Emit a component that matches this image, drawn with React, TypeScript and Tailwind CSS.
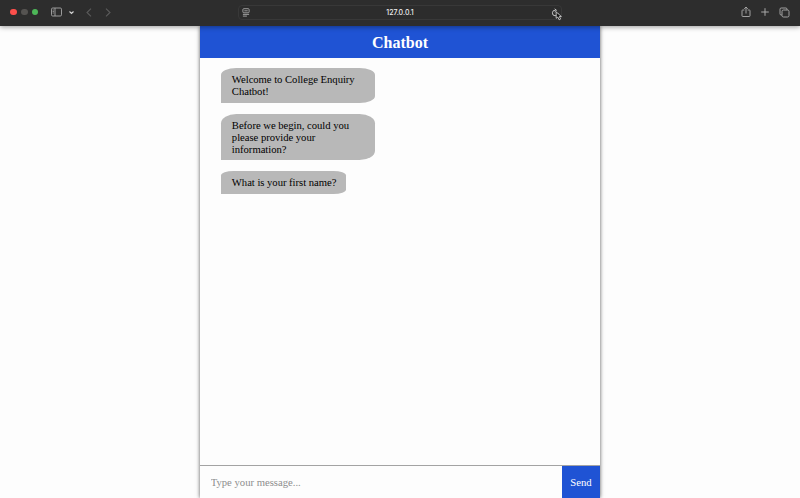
import React from "react";

const messages = [
  { lines: ["Welcome to College Enquiry", "Chatbot!"], box: "w-[153.7px] h-[34.7px]" },
  { lines: ["Before we begin, could you", "please provide your", "information?"], box: "w-[153.7px] h-[46.7px]" },
  { lines: ["What is your first name?"], box: "w-[125px] h-[22.7px]" },
];

function BrowserBar() {
  return (
    <header className="relative z-10 flex h-[26px] shrink-0 items-center bg-[#2d2d2d] pb-[2px] text-[#a8a8a8] shadow-[0_1px_5px_rgba(0,0,0,0.4)]">
      <div className="flex w-[238px] items-center pl-[10.4px]">
        <div className="flex gap-[4px]">
          <i className="size-[6.6px] rounded-full bg-[#fc4f4b]" />
          <i className="size-[6.6px] rounded-full bg-[#555351]" />
          <i className="size-[6.6px] rounded-full bg-[#4db758]" />
        </div>
        <svg className="ml-[13px] h-[10px] w-[11px]" viewBox="0 0 11 10" fill="none" stroke="currentColor" strokeWidth=".9">
          <rect x=".5" y="1" width="10" height="8" rx="1.2" />
          <path d="M4 1v8M1.7 3h1.1M1.7 4.5h1.1M1.7 6h1.1" />
        </svg>
        <svg className="ml-[6.5px] h-[5px] w-[5px]" viewBox="0 0 5 5" fill="none" stroke="#d5d5d5" strokeWidth="1.1">
          <path d="M.5 1.5l2 2 2-2" />
        </svg>
        <svg className="ml-[12px] h-[9px] w-[6px]" viewBox="0 0 6 9" fill="none" stroke="#5b5b5b" strokeWidth="1.1">
          <path d="M5 .7L1 4.5 5 8.3" />
        </svg>
        <svg className="ml-[13px] h-[9px] w-[6px]" viewBox="0 0 6 9" fill="none" stroke="#5b5b5b" strokeWidth="1.1">
          <path d="M1 .7l4 3.8-4 3.8" />
        </svg>
      </div>
      <div className="relative flex h-[15px] w-[324px] items-center justify-center rounded-[4px] border border-[#383838] bg-[#2c2c2c]">
        <svg className="absolute left-[3px] top-[2px] h-[9px] w-[8px]" viewBox="0 0 8 9" fill="none" stroke="currentColor" strokeWidth=".9">
          <rect x=".9" y=".7" width="6.2" height="4.1" rx=".9" />
          <path d="M2.3 2.8h3.4M.9 6.4h6.2M.9 8.1h4" />
        </svg>
        <span className="font-[Inter,sans-serif] text-[7px] font-medium leading-none text-[#eeeeee]">127.0.0.1</span>
        <svg className="absolute left-[312px] top-[2px] h-[13px] w-[12px]" viewBox="0 0 12 13" fill="none" stroke="#c1c1c1" strokeWidth="1">
          <path d="M4.5 2.2A2.8 2.8 0 1 0 7 5M3.7.8l1.8 1.5-1.8 1.6" />
          <path d="M5.2 3.9v6.4l1.6-1.3 1.3 2.8 1.5-.7-1.3-2.6h2.1z" fill="#111" stroke="#dddddd" strokeWidth=".8" />
        </svg>
      </div>
      <div className="ml-auto flex items-center gap-[9px] pr-[10px]">
        <svg className="h-[12px] w-[10px]" viewBox="0 0 10 12" fill="none" stroke="currentColor" strokeWidth=".95">
          <path d="M3.3 4H1.6Q1 4 1 4.7v5q0 .8.8.8h6.4q.8 0 .8-.8v-5Q9 4 8.4 4H6.7M5 7.5V1M3.2 2.8L5 1l1.8 1.8" />
        </svg>
        <svg className="h-[10px] w-[10px]" viewBox="0 0 10 10" stroke="currentColor" strokeWidth="1"><path d="M5 1.2v7.6M1.2 5h7.6" /></svg>
        <svg className="h-[11px] w-[11px]" viewBox="0 0 11 11" fill="none" stroke="currentColor" strokeWidth=".95">
          <rect x="3" y="3" width="7" height="7" rx="1.5" />
          <path d="M3 8H2.2Q1 8 1 6.8V2.2Q1 1 2.2 1h4.6Q8 1 8 2.2V3" />
        </svg>
      </div>
    </header>
  );
}

export default function App() {
  return (
    <div className="flex h-[498px] w-[800px] flex-col overflow-hidden bg-[#fdfdfd] font-['Liberation_Serif',serif]">
      <BrowserBar />
      <main className="mx-auto flex min-h-0 w-[400px] flex-1 flex-col bg-[#fdfdfd] text-[10.67px] shadow-[0_0_4px_rgba(0,0,0,0.65)]">
        <h1 className="flex h-[32px] shrink-0 items-center justify-center bg-[#1f53d4] pt-px text-[16px] font-bold text-white">Chatbot</h1>
        <section className="flex min-h-0 flex-1 flex-col items-start gap-[10.67px] pl-[21.2px] pt-[10.4px] tracking-[-0.035px]">
          {messages.map((message) => (
            <div key={message.lines[0]} className={`${message.box} rounded-[10%_10%_10%_0/20%_20%_20%_0] bg-[#b8b8b8] px-[10.67px] pt-[5px] leading-[12px] text-black`}>
              {message.lines.map((line) => <p key={line} className="whitespace-nowrap">{line}</p>)}
            </div>
          ))}
        </section>
        <form className="flex h-[33px] shrink-0 border-t border-[#a3a3a3]">
          <input className="min-w-0 flex-1 pl-[10.67px] pt-px outline-none placeholder:text-[#8d8d8d]" placeholder="Type your message..." />
          <button type="button" className="w-[38px] bg-[#1f53d4] text-white">Send</button>
        </form>
      </main>
    </div>
  );
}
